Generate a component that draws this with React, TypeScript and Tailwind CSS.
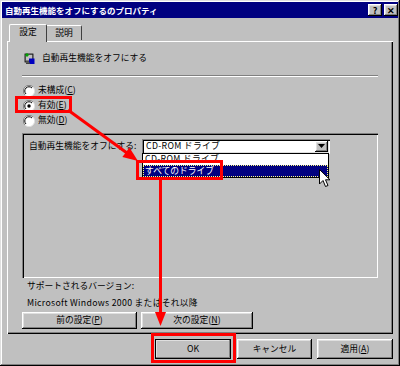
import React from 'react';

const raised =
  'shadow-[inset_-1px_-1px_#000,inset_1px_1px_#fff,inset_-2px_-2px_#808080,inset_2px_2px_#dfdfdf]';
const sunken =
  'shadow-[inset_1px_1px_#808080,inset_2px_2px_#000,inset_-1px_-1px_#fff,inset_-2px_-2px_#dfdfdf]';

const Radio = ({ checked }: { checked?: boolean }) => (
  <svg width="12" height="12" viewBox="0 0 12 12" className="shrink-0">
    <circle cx="6" cy="6" r="5.5" fill="#fff" />
    <path d="M10 2 A5.5 5.5 0 0 0 2 10" stroke="#808080" strokeWidth="1" fill="none" />
    <path d="M9 3 A4.2 4.2 0 0 0 3 9" stroke="#000" strokeWidth="1" fill="none" />
    <path d="M2 10 A5.5 5.5 0 0 0 10 2" stroke="#dfdfdf" strokeWidth="1" fill="none" />
    {checked && <circle cx="6" cy="6" r="1.7" fill="#000" />}
  </svg>
);

const Btn = ({ children, className = '' }: { children: React.ReactNode; className?: string }) => (
  <div className={`flex items-center justify-center bg-[#c0c0c0] ${raised} ${className}`}>{children}</div>
);

export default function App() {
  return (
    <div className="relative w-[400px] h-[366px] bg-[#c0c0c0] p-[2px] flex flex-col text-black text-[8.75px] leading-none font-['Noto_Sans_CJK_JP','Noto_Sans',sans-serif] shadow-[inset_-1px_-1px_#000,inset_1px_1px_#dfdfdf,inset_-2px_-2px_#808080,inset_2px_2px_#fff] overflow-hidden">
      {/* title bar */}
      <div className="h-[16px] shrink-0 bg-[#000080] flex items-center justify-between pl-[3px]">
        <span className="text-white font-bold text-[8.5px]">自動再生機能をオフにするのプロパティ</span>
        <div className="flex gap-[2px] items-center">
          <Btn className="w-[14px] h-[12px] text-[9px] font-bold">?</Btn>
          <Btn className="w-[14px] h-[12px] text-[9px] font-bold">✕</Btn>
        </div>
      </div>

      <div className="flex flex-col px-[5px]">
        {/* tabs */}
        <div className="flex items-end mt-[5px] ml-[2px] h-[18px] relative z-10">
          <div className="w-[38px] h-[18px] -mb-[1px] bg-[#c0c0c0] border-t border-l border-white border-r border-r-[#404040] rounded-t-[2px] flex items-center justify-center pb-[2px]">
            設定
          </div>
          <div className="w-[35px] h-[15px] mb-[1px] bg-[#c0c0c0] border-t border-white border-r border-r-[#404040] rounded-tr-[2px] flex items-center justify-center">
            説明
          </div>
        </div>

        {/* tab panel */}
        <div className="relative h-[293px] px-[15px] flex flex-col shadow-[inset_1px_1px_#fff,inset_-1px_-1px_#000,inset_-2px_-2px_#808080]">
          <div className="h-[12px] mt-[11px] flex items-center">
            <svg width="11" height="13" viewBox="0 0 11 13" className="ml-[2px]">
              <rect x="1" y="2" width="8" height="8" fill="#808080" stroke="#000" strokeWidth="0.8" />
              <rect x="2" y="3" width="6" height="5" fill="#c0c0c0" />
              <path d="M1 3 L3 1 L5 3 L3 5 Z" fill="#00a000" />
              <rect x="5" y="6.5" width="5.5" height="5.5" fill="#0000c0" />
              <rect x="2" y="10.5" width="4" height="1.5" fill="#404040" />
            </svg>
            <span className="ml-[7px]">自動再生機能をオフにする</span>
          </div>

          <div className="mt-[11px] h-[2px] border-t border-[#808080] border-b border-b-white" />

          <div className="mt-[6px] flex flex-col">
            <div className="h-[15px] flex items-center gap-[3px] ml-[1px]">
              <Radio />
              <span>未構成(<u>C</u>)</span>
            </div>
            <div className="h-[15px] flex items-center gap-[3px] ml-[1px]">
              <Radio checked />
              <span>有効(<u>E</u>)</span>
            </div>
            <div className="h-[15px] flex items-center gap-[3px] ml-[1px]">
              <Radio />
              <span>無効(<u>D</u>)</span>
            </div>
          </div>

          {/* group box */}
          <div className="relative mt-[5px] h-[145px] pt-[6px] shadow-[inset_1px_1px_#808080,inset_2px_2px_#000,inset_-1px_-1px_#fff]">
            <div className="flex items-center h-[14px]">
              <span className="w-[120px] pl-[7px]">自動再生機能をオフにする:</span>
              <div className={`w-[188px] h-[15px] bg-white flex items-center justify-between pl-[4px] pr-[2px] ${sunken}`}>
                <span className="tracking-[0.3px]">CD-ROM ドライブ</span>
                <Btn className="w-[13px] h-[11px]">
                  <svg width="7" height="4" viewBox="0 0 7 4"><path d="M0 0 H7 L3.5 4 Z" fill="#000" /></svg>
                </Btn>
              </div>
            </div>
            {/* open dropdown */}
            <div className="absolute left-[120px] top-[20px] w-[187px] h-[25px] bg-white border border-black flex flex-col">
              <div className="h-[11px] flex items-center pl-[2px] tracking-[0.3px]">CD-ROM ドライブ</div>
              <div className="h-[12px] bg-[#000080] text-white flex items-center pl-[2px] outline-1 outline-dotted outline-[#ffff80] -outline-offset-1">
                すべてのドライブ
              </div>
            </div>
          </div>

          <div className="mt-[3px] h-[10px] flex items-center ml-[5px]">サポートされるバージョン:</div>
          <div className="mt-[7px] h-[10px] flex items-center ml-[5px] tracking-[0.3px]">Microsoft Windows 2000 またはそれ以降</div>

          <div className="mt-[4px] flex gap-[4px]">
            <Btn className="w-[115px] h-[17px]">前の設定(<u>P</u>)</Btn>
            <Btn className="w-[112px] h-[17px]">次の設定(<u>N</u>)</Btn>
          </div>
        </div>

        {/* bottom buttons */}
        <div className="mt-[5px] flex justify-end">
          <Btn className="w-[76px] h-[20px] outline outline-black -outline-offset-1">OK</Btn>
          <Btn className="w-[75px] h-[20px] ml-[6px]">キャンセル</Btn>
          <Btn className="w-[76px] h-[20px] ml-[5px]">適用(<u>A</u>)</Btn>
        </div>
      </div>

      {/* mouse cursor */}
      <svg width="13" height="20" viewBox="0 0 13 20" className="absolute left-[319px] top-[169px]">
        <path d="M0.5 0.5 L0.5 15 L4 11.5 L6.5 17.5 L9 16.5 L6.5 10.8 L11 10.8 Z" fill="#fff" stroke="#000" strokeWidth="1" />
      </svg>

      {/* red annotations */}
      <svg width="400" height="366" viewBox="0 0 400 366" className="absolute left-0 top-0 pointer-events-none">
        <rect x="16.5" y="97.5" width="54" height="14" fill="none" stroke="#ff0000" strokeWidth="3" />
        <line x1="68" y1="110" x2="127" y2="153" stroke="#ff0000" strokeWidth="3" />
        <polygon points="138,161 122.4,157 129.4,147.4" fill="#ff0000" />
        <rect x="137.5" y="161.5" width="84" height="17" fill="none" stroke="#ff0000" strokeWidth="3" />
        <line x1="160.5" y1="180" x2="160.5" y2="313" stroke="#ff0000" strokeWidth="3" />
        <polygon points="155,312 166,312 160.5,326" fill="#ff0000" />
        <rect x="152.5" y="334.5" width="82" height="27" fill="none" stroke="#ff0000" strokeWidth="3" />
      </svg>
    </div>
  );
}
